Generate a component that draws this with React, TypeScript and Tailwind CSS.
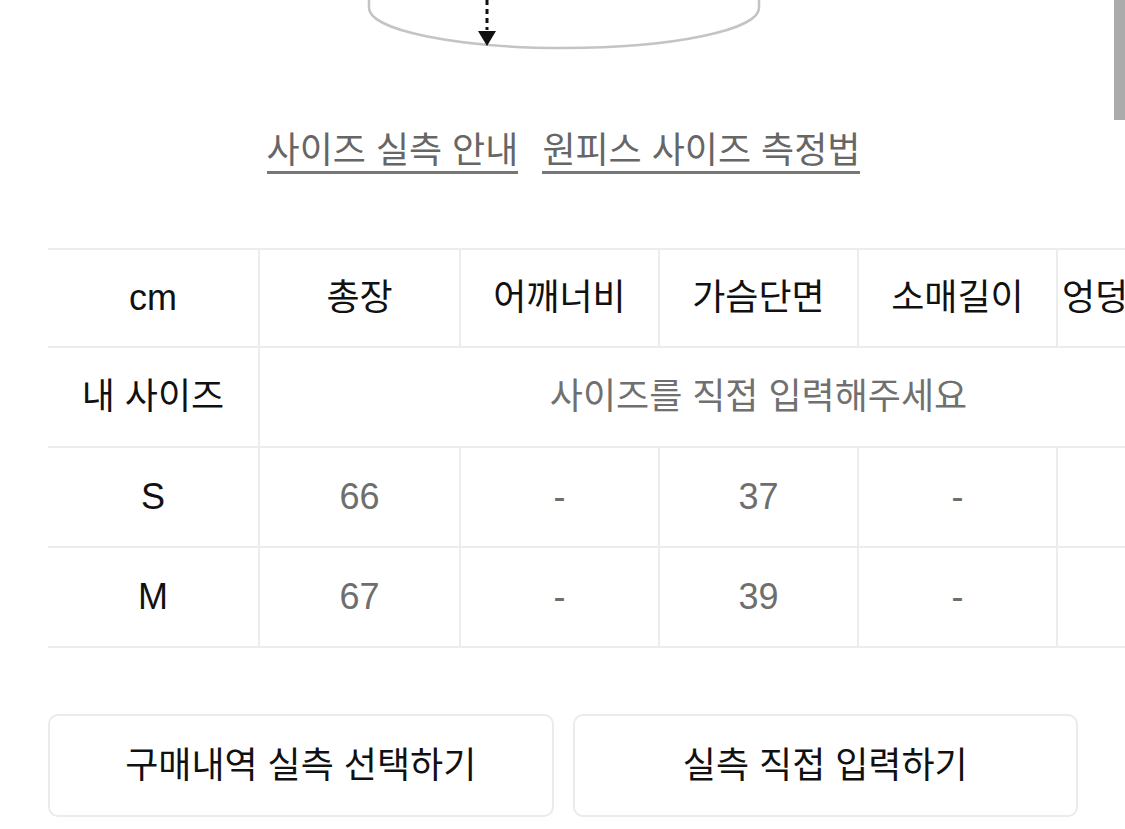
import React from "react";

const font = { fontFamily: '"Liberation Sans", "Noto Sans CJK KR", sans-serif' };

const cols = ["w-[212px]", "w-[201px]", "w-[199px]", "w-[199px]", "w-[199px]", "w-[199px]", "w-[199px]"];

function Cell({ w, children, cls = "", border = true }: { w: string; children?: React.ReactNode; cls?: string; border?: boolean }) {
  return (
    <div className={`${w} shrink-0 h-full flex items-center justify-center whitespace-nowrap ${border ? "border-r-2 border-[#ececec]" : ""} ${cls}`}>
      {children}
    </div>
  );
}

export default function App() {
  const header = ["총장", "어깨너비", "가슴단면", "소매길이", "엉덩이단면", "허벅지단면"];
  const rows = [
    ["S", "66", "-", "37", "-", "", ""],
    ["M", "67", "-", "39", "-", "", ""],
  ];
  return (
    <div className="relative w-[1125px] h-[829px] overflow-hidden bg-white" style={font}>
      {/* scrollbar */}
      <div className="absolute right-0 top-0 w-[11px] h-[120px] bg-[#ababab]" />

      {/* top diagram */}
      <div className="h-[52px] w-full">
        <svg width="1125" height="52" viewBox="0 0 1125 52">
          <path d="M369 0 L369 8 A195 40 0 0 0 759 8 L759 0" fill="none" stroke="#c4c4c4" strokeWidth="2.5" />
          <line x1="487" y1="0" x2="487" y2="30" stroke="#111" strokeWidth="3" strokeDasharray="5 4" />
          <polygon points="478,31 496,31 487,46" fill="#111" />
        </svg>
      </div>

      {/* links */}
      <div className="mt-[79px] flex justify-center gap-[24px] pl-[2px] text-[36px] leading-[40px] text-[#666666]">
        <span className="border-b-[3px] border-[#777777]">사이즈 실측 안내</span>
        <span className="border-b-[3px] border-[#777777]">원피스 사이즈 측정법</span>
      </div>

      {/* table */}
      <div className="mt-[74px] ml-[48px] w-max">
        <div className="flex h-[100px] border-t-2 border-b-2 border-[#ececec] text-[36px] text-[#111]">
          <Cell w={cols[0]}>cm</Cell>
          {header.map((h, i) => (
            <Cell key={i} w={cols[i + 1]} cls={i === 4 ? "!justify-start pl-[4px]" : ""}>
              {h}
            </Cell>
          ))}
        </div>
        <div className="flex h-[100px] border-b-2 border-[#ececec] text-[36px]">
          <Cell w={cols[0]} cls="text-[#111]">내 사이즈</Cell>
          <div className="w-[997px] shrink-0 h-full flex items-center justify-center text-[#707070]">
            사이즈를 직접 입력해주세요
          </div>
        </div>
        {rows.map((r, ri) => (
          <div key={ri} className="flex h-[100px] border-b-2 border-[#ececec] text-[36px]">
            {r.map((v, i) => (
              <Cell key={i} w={cols[i]} cls={i === 0 ? "text-[#111]" : "text-[#6e6e6e]"}>
                {v}
              </Cell>
            ))}
          </div>
        ))}
      </div>

      {/* buttons */}
      <div className="mt-[66px] ml-[48px] w-[1030px] flex gap-[19px]">
        <button className="flex-1 h-[103px] rounded-[10px] border-2 border-[#ebebeb] bg-white text-[36px] text-[#111] flex items-center justify-center">
          구매내역 실측 선택하기
        </button>
        <button className="flex-1 h-[103px] rounded-[10px] border-2 border-[#ebebeb] bg-white text-[36px] text-[#111] flex items-center justify-center">
          실측 직접 입력하기
        </button>
      </div>
    </div>
  );
}
